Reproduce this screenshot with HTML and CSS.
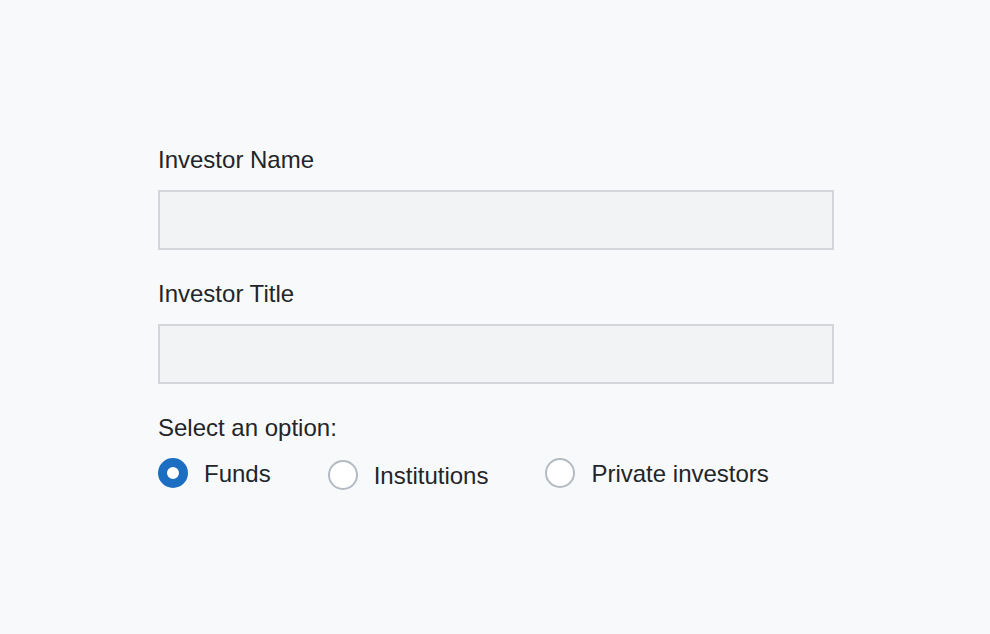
FILE: index.html
```html
<!DOCTYPE html>
<html lang="en">
<head>
<meta charset="utf-8">
<title>Investor form</title>
<link rel="stylesheet" href="styles.css">
</head>
<body>
<form class="form">
  <div class="field">
    <label class="label" for="name">Investor Name</label>
    <input class="input" id="name" type="text">
  </div>
  <div class="field">
    <label class="label" for="title">Investor Title</label>
    <input class="input" id="title" type="text">
  </div>
  <div class="field">
    <span class="label">Select an option:</span>
    <div class="options">
      <label class="option"><input class="radio" type="radio" name="kind" checked><span class="option-text">Funds</span></label>
      <label class="option option-low"><input class="radio" type="radio" name="kind"><span class="option-text">Institutions</span></label>
      <label class="option"><input class="radio" type="radio" name="kind"><span class="option-text">Private investors</span></label>
    </div>
  </div>
</form>
</body>
</html>
```

FILE: styles.css
```css
html, body {
  margin: 0;
  height: 100%;
  background: #f8f9fa;
}
body {
  font-family: "Liberation Sans", Arial, sans-serif;
  font-size: 24px;
  line-height: 28px;
  color: #222529;
}
.form {
  width: 676px;
  padding: 146px 0 0 158px;
  display: flex;
  flex-direction: column;
  gap: 30px;
}
.field {
  display: flex;
  flex-direction: column;
  gap: 16px;
}
.label {
  display: block;
}
.input {
  box-sizing: border-box;
  width: 676px;
  height: 60px;
  margin: 0;
  border: 2px solid #d2d6db;
  border-radius: 0;
  background: #f2f3f5;
  font: inherit;
  padding: 0 12px;
}
.options {
  display: flex;
  align-items: flex-start;
  gap: 57px;
}
.option {
  display: flex;
  align-items: center;
  gap: 16px;
  height: 30px;
}
.option-text {
  padding-top: 1px;
}
.option-low {
  margin-top: 2px;
}
.radio {
  appearance: none;
  -webkit-appearance: none;
  box-sizing: border-box;
  width: 30px;
  height: 30px;
  margin: 0;
  border-radius: 50%;
  border: 2px solid #b3bac2;
  background: #ffffff;
}
.radio:checked {
  border: 9px solid #1b6ec2;
  background: #ffffff;
}
```
